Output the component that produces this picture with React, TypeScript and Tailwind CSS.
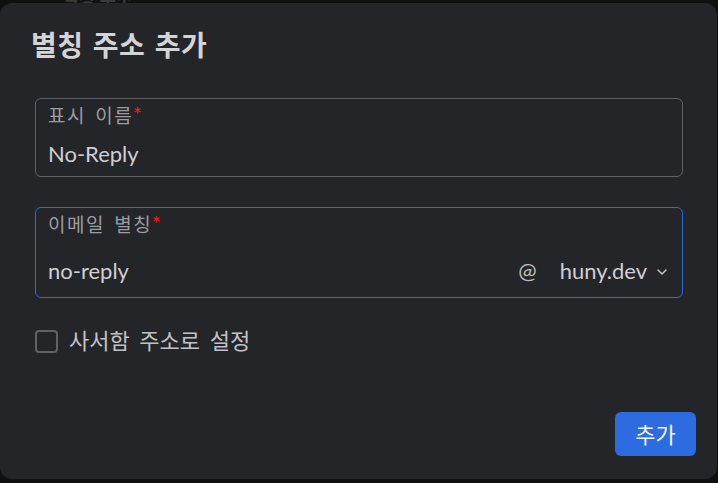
export default function App() {
  const font = { fontFamily: "Lato, 'Noto Sans CJK KR', sans-serif" };
  return (
    <div className="relative w-[718px] h-[483px] bg-[#101011] overflow-hidden" style={font}>
      {/* page content peeking behind the modal */}
      <div className="absolute left-[62px] top-[-14px] text-[18px] font-bold text-[#3a3a3d]">별칭 주소</div>

      <div className="relative mt-[3px] w-[717px] h-[476px] rounded-[12px] bg-[#242528] flex flex-col pl-[35px] pr-[34px] pt-[24px] pb-[23px]">
        <h2 className="text-[28px] leading-[36px] font-bold text-[#d4d4d8] -ml-[4px] tracking-[0.5px] [word-spacing:2px]">별칭 주소 추가</h2>

        {/* display name */}
        <div className="mt-[35px] h-[79px] rounded-[6px] border border-[#606166] px-[12px] pt-[4px] flex flex-col">
          <div className="text-[19px] leading-[26px] text-[#9c9ca2] tracking-[1.5px] [word-spacing:3px]">
            표시 이름<span className="text-[#e01e1e] text-[19px] font-bold leading-none relative top-[-2px]">*</span>
          </div>
          <div className="mt-[11px] text-[22px] leading-[28px] text-[#cfcfd3]">No-Reply</div>
        </div>

        {/* email alias */}
        <div className="mt-[30px] h-[91px] rounded-[6px] border border-[#2f6ad4] pl-[12px] pr-[15px] pt-[4px] flex flex-col">
          <div className="text-[19px] leading-[26px] text-[#9c9ca2] tracking-[1.5px] [word-spacing:3px]">
            이메일 별칭<span className="text-[#e01e1e] text-[19px] font-bold leading-none relative top-[-2px]">*</span>
          </div>
          <div className="mt-[19px] flex items-center text-[22px] leading-[28px] text-[#cfcfd3]">
            <span className="flex-1">no-reply</span>
            <span className="text-[#bdbdc2]">@</span>
            <span className="ml-[23px]">huny.dev</span>
            <svg className="ml-[10px] mt-[2px]" width="10" height="6" viewBox="0 0 10 6" fill="none">
              <path d="M1 1l4 4 4-4" stroke="#c4c4c8" strokeWidth="1.5" strokeLinecap="round" strokeLinejoin="round" />
            </svg>
          </div>
        </div>

        {/* checkbox */}
        <label className="mt-[29px] flex items-center gap-[11px]">
          <span className="w-[23px] h-[23px] rounded-[4px] border-2 border-[#606166]" />
          <span className="text-[22px] leading-[28px] text-[#c2c2c6] [word-spacing:4px]">사서함 주소로 설정</span>
        </label>

        <div className="mt-auto flex justify-end -mr-[13px]">
          <button className="w-[81px] h-[44px] rounded-[6px] bg-[#2d6be0] text-[22px] text-[#f4f6ff]">추가</button>
        </div>
      </div>
    </div>
  );
}
